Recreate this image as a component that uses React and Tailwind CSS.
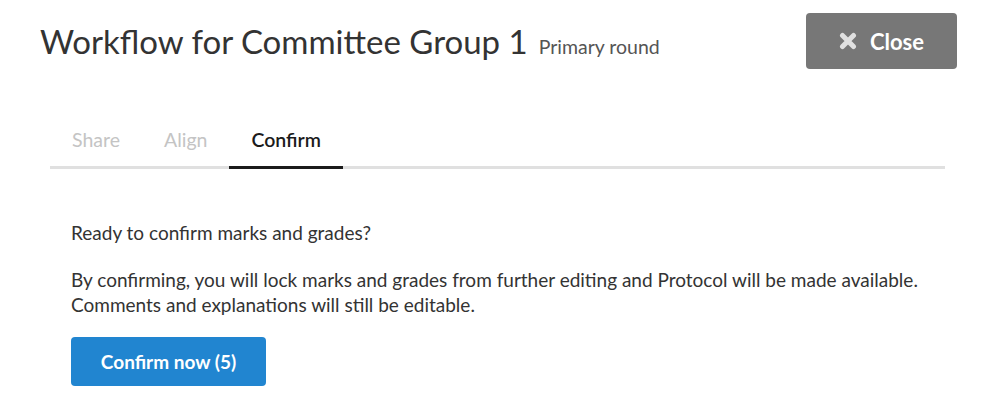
export default function App() {
  return (
    <div className="min-h-screen bg-white font-['Lato','Noto_Sans',sans-serif] text-[#333]">
      {/* Header */}
      <div className="flex items-start justify-between pl-[40px] pr-[34px] pt-[13px]">
        <div className="flex items-baseline pt-[9px]">
          <h1 className="text-[33px] leading-[38px] font-normal text-[#333]">Workflow for Committee Group 1</h1>
          <span className="ml-[11px] text-[19.5px] text-[#555]">Primary round</span>
        </div>
        <button className="flex h-[56px] w-[151px] items-center justify-center gap-[13px] rounded-[4px] bg-[#777] text-[22px] font-bold text-white">
          <svg width="18" height="18" viewBox="0 0 18 18">
            <path d="M3.5 3.5 L14.5 14.5 M14.5 3.5 L3.5 14.5" stroke="#e0e0e0" strokeWidth="5" strokeLinecap="round" />
          </svg>
          Close
        </button>
      </div>

      {/* Tabs */}
      <div className="ml-[50px] mr-[46px] mt-[55px] flex border-b-[3px] border-[#e0e0e0]">
        <div className="mb-[-3px] px-[22px] pt-[2px] pb-[12px] text-[19.5px] leading-[28px] text-[#c4c4c4]">Share</div>
        <div className="mb-[-3px] px-[22px] pt-[2px] pb-[12px] text-[19.5px] leading-[28px] text-[#c4c4c4]">Align</div>
        <div className="mb-[-3px] border-b-[3px] border-[#1b1b1b] px-[22px] pt-[2px] pb-[12px] text-[19.5px] leading-[28px] font-semibold text-[#1b1b1b]">Confirm</div>
      </div>

      {/* Body */}
      <div className="px-[71px] pt-[51px] text-[19px] leading-[25px] text-[#333]">
        <p>Ready to confirm marks and grades?</p>
        <p className="mt-[22px]">
          By confirming, you will lock marks and grades from further editing and Protocol will be made available.
          <br />
          Comments and explanations will still be editable.
        </p>
        <button className="mt-[20px] h-[49px] w-[195px] rounded-[4px] bg-[#2185d0] text-[19px] font-bold text-white">
          Confirm now (5)
        </button>
      </div>
    </div>
  )
}
